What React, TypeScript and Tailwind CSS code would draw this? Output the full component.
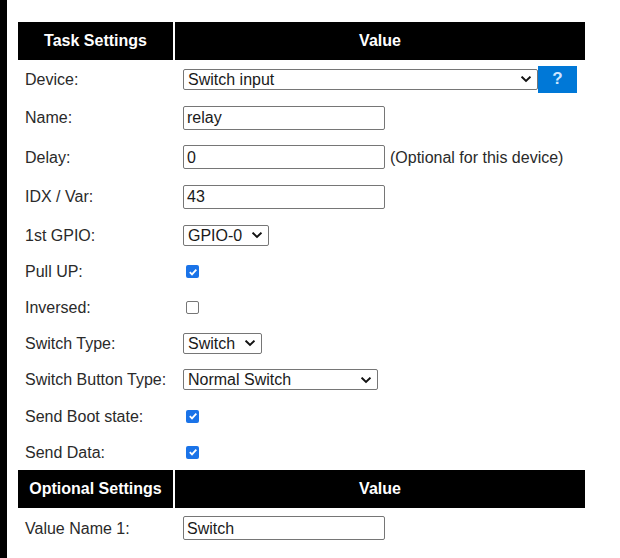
import React from "react";

const font = { fontFamily: '"Liberation Sans", Arial, sans-serif' };

function Chevron() {
  return (
    <svg width="10" height="7" viewBox="0 0 10 7" className="shrink-0">
      <path d="M1.2 1.3 L5 5 L8.8 1.3" fill="none" stroke="#111" strokeWidth="1.9" strokeLinecap="square" />
    </svg>
  );
}

function Select({ text, w }: { text: string; w: string }) {
  return (
    <div className={`${w} h-[21px] border border-[#767676] rounded-[2px] bg-white flex items-center justify-between pl-[4px] pr-[6px] pt-[1px] text-[16px] leading-none text-[#1a1a1a]`}>
      <span>{text}</span>
      <Chevron />
    </div>
  );
}

function Input({ text }: { text: string }) {
  return (
    <div className="w-[202px] h-[24px] border border-[#767676] rounded-[2px] bg-white flex items-center pl-[3px] pt-[1px] text-[16px] leading-none text-[#1a1a1a]">
      {text}
    </div>
  );
}

function Check({ on }: { on: boolean }) {
  return on ? (
    <div className="ml-[3px] w-[13px] h-[13px] rounded-[2px] bg-[#1a73e8] flex items-center justify-center">
      <svg width="10" height="10" viewBox="0 0 10 10">
        <path d="M1.8 5.2 L4 7.4 L8.3 2.6" fill="none" stroke="white" strokeWidth="1.8" />
      </svg>
    </div>
  ) : (
    <div className="ml-[3px] w-[13px] h-[13px] rounded-[2px] border border-[#767676] bg-white" />
  );
}

function Row({ label, h, children }: { label: string; h: string; children: React.ReactNode }) {
  return (
    <div className={`flex ${h}`}>
      <div className="w-[157px] pl-[7px] pt-[1px] flex items-center text-[16px] text-[#2a2a2a]">{label}</div>
      <div className="flex-1 pl-[8px] flex items-center">{children}</div>
    </div>
  );
}

function Header({ left }: { left: string }) {
  return (
    <div className="flex h-[38px] gap-[2px] text-white font-bold text-[16px]">
      <div className="w-[155px] bg-black flex items-center justify-center">{left}</div>
      <div className="flex-1 bg-black flex items-center justify-center">Value</div>
    </div>
  );
}

export default function App() {
  return (
    <div className="w-[620px] h-[558px] bg-white flex overflow-hidden" style={font}>
      <div className="w-[7px] bg-black shrink-0" />
      <div className="pl-[11px] pt-[22px]">
        <div className="w-[567px] flex flex-col">
          <Header left="Task Settings" />
          <Row label="Device:" h="h-[38px]">
            <Select text="Switch input" w="w-[355px]" />
            <div className="w-[39px] h-[27px] bg-[#0078d7] flex items-center justify-center text-[#cfe6ff] text-[17px] font-bold">?</div>
          </Row>
          <Row label="Name:" h="h-[39px]">
            <Input text="relay" />
          </Row>
          <Row label="Delay:" h="h-[40px]">
            <Input text="0" />
            <span className="ml-[5px] pt-[1px] text-[16px] text-[#2a2a2a]">(Optional for this device)</span>
          </Row>
          <Row label="IDX / Var:" h="h-[39px]">
            <Input text="43" />
          </Row>
          <Row label="1st GPIO:" h="h-[38px]">
            <Select text="GPIO-0" w="w-[86px]" />
          </Row>
          <Row label="Pull UP:" h="h-[35px]">
            <Check on={true} />
          </Row>
          <Row label="Inversed:" h="h-[36px]">
            <Check on={false} />
          </Row>
          <Row label="Switch Type:" h="h-[36px]">
            <Select text="Switch" w="w-[79px]" />
          </Row>
          <Row label="Switch Button Type:" h="h-[37px]">
            <Select text="Normal Switch" w="w-[195px]" />
          </Row>
          <Row label="Send Boot state:" h="h-[36px]">
            <Check on={true} />
          </Row>
          <Row label="Send Data:" h="h-[36px]">
            <Check on={true} />
          </Row>
          <Header left="Optional Settings" />
          <Row label="Value Name 1:" h="h-[40px]">
            <Input text="Switch" />
          </Row>
        </div>
      </div>
    </div>
  );
}
